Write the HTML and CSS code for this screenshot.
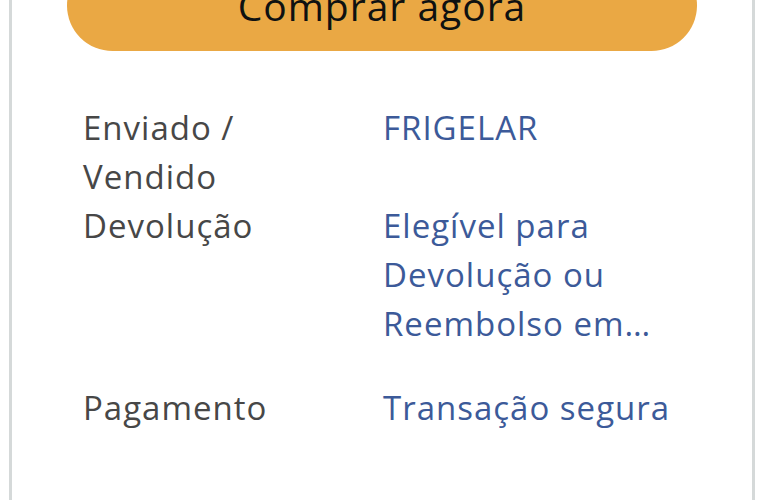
FILE: index.html
```html
<!DOCTYPE html>
<html lang="pt-BR">
<head>
    <meta charset="UTF-8">
    <title>Comprar agora</title>
    <link rel="stylesheet" href="styles.css">
</head>
<body>
    <div class="buybox">
        <button type="button" class="btn-comprar">Comprar agora</button>

        <div class="info">
            <div class="info-label">Enviado / Vendido</div>
            <div class="info-valor"><a href="#">FRIGELAR</a></div>

            <div class="info-label">Devolução</div>
            <div class="info-valor clamp"><a href="#">Elegível para Devolução ou Reembolso em até 30 dias a partir do recebimento</a></div>

            <div class="info-label">Pagamento</div>
            <div class="info-valor"><a href="#">Transação segura</a></div>
        </div>
    </div>
</body>
</html>
```

FILE: styles.css
```css
body {
    margin: 0;
    background: #fff;
    font-family: "Open Sans", "Noto Sans", Arial, sans-serif;
    overflow: hidden;
}
.buybox {
    margin: -40px 3px 0 9px;
    height: 620px;
    border: 3px solid #d5d9d9;
    border-top: none;
    padding: 0 55px;
}
.btn-comprar {
    display: block;
    width: 630px;
    height: 91px;
    padding: 0;
    border: none;
    border-radius: 46px;
    background: #eaa844;
    color: #0f1111;
    font-family: inherit;
    font-size: 39px;
    letter-spacing: 1px;
    cursor: pointer;
}
.info {
    display: grid;
    grid-template-columns: 300px 302px;
    margin: 52px 0 0 16px;
    font-size: 33px;
    letter-spacing: 1px;
    line-height: 49px;
}
.info-label {
    color: #474747;
    width: 170px;
}
.info-valor {
    color: #3c5a99;
}
.info-valor a {
    color: inherit;
    text-decoration: none;
}
.clamp {
    display: -webkit-box;
    -webkit-line-clamp: 3;
    -webkit-box-orient: vertical;
    overflow: hidden;
    margin-bottom: 35px;
}
```
